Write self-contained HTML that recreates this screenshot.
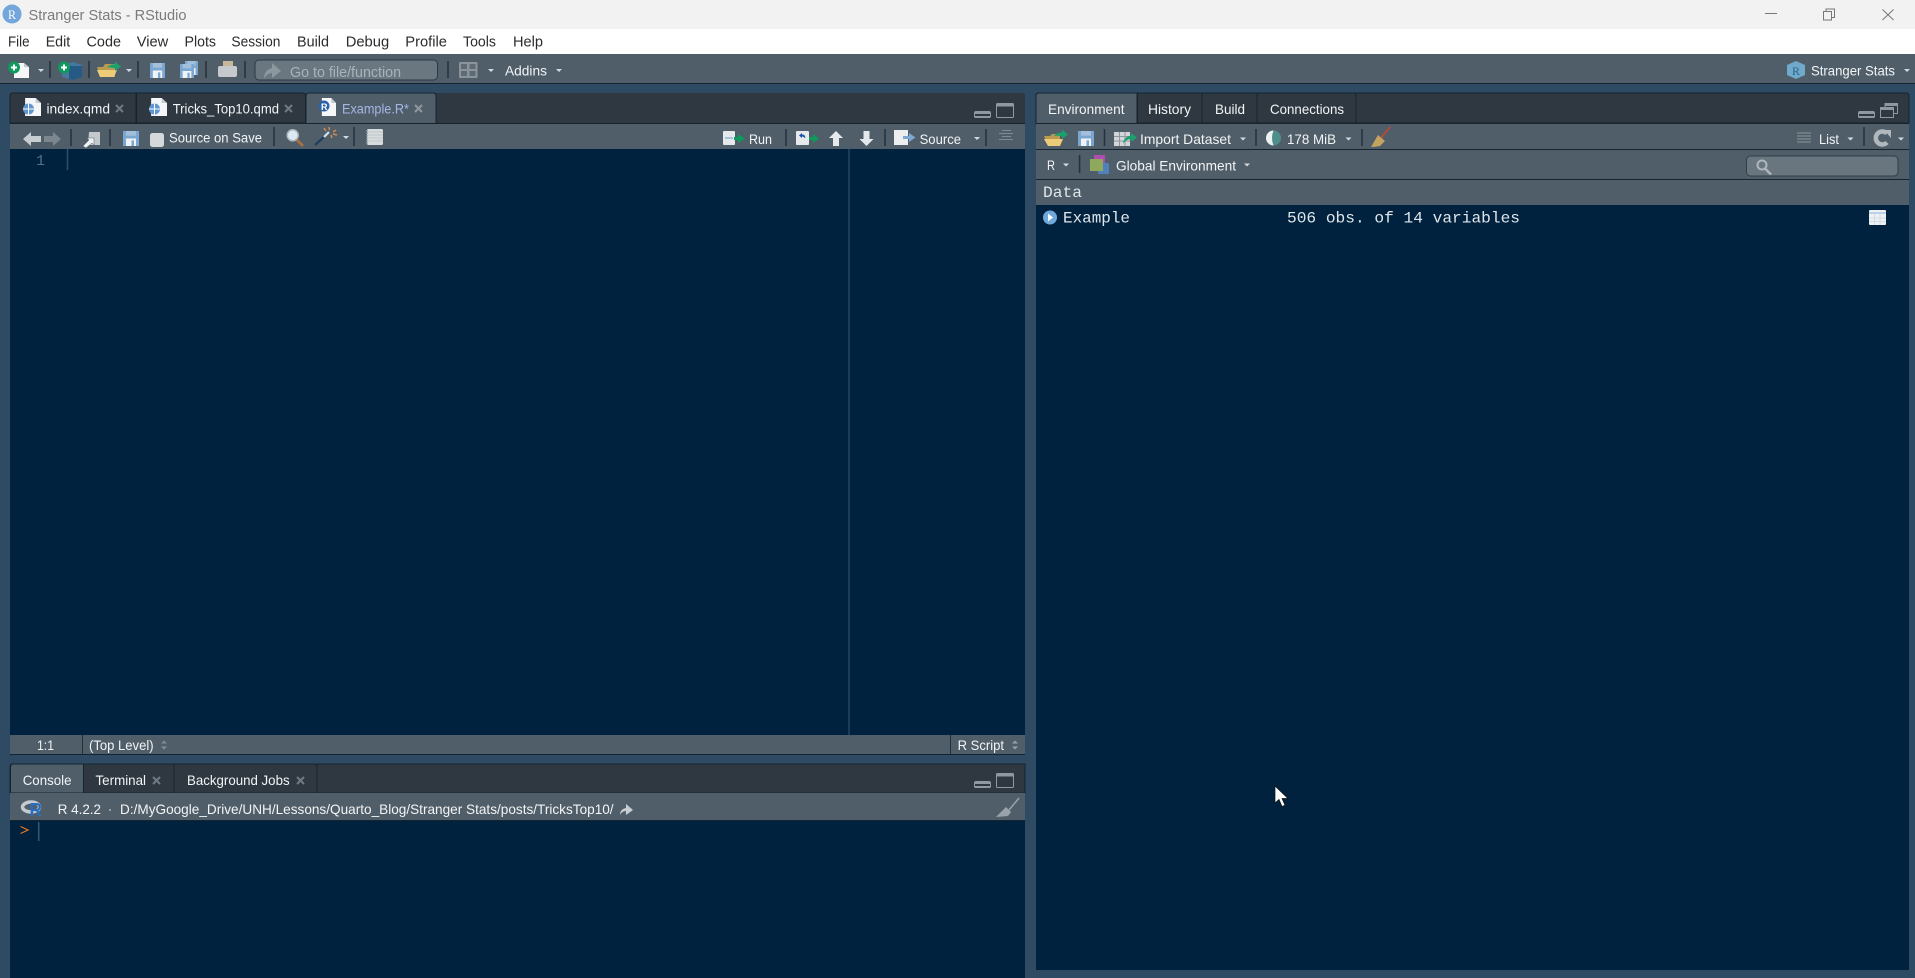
<!DOCTYPE html>
<html lang="en"><head><meta charset="utf-8"><title>Stranger Stats - RStudio</title>
<style>
html,body{margin:0;padding:0;background:#2f4a63;overflow:hidden}
svg{display:block}
text{font-family:"Liberation Sans",sans-serif;font-size:14px;fill:#f2f4f5}
.m{font-family:"Liberation Mono",monospace;font-size:16px;fill:#dfe6ea}
.menu{font-size:15px;fill:#2b2b2b}
.sep{stroke:#24313c;stroke-width:1.500}
.dd{fill:#d5dade}
.x{stroke:#6f7a83;stroke-width:2;fill:none}
.dark{fill:#00223f}
</style></head><body>
<svg xmlns="http://www.w3.org/2000/svg" width="1915" height="978" viewBox="0 0 1915 978">
<defs>
<symbol id="save" viewBox="0 0 16 16" preserveAspectRatio="none"><path d="M0 0h16v16H0z" fill="#7aa6d2"/><path d="M3 0h10v5H3z" fill="#a3bfda"/><path d="M3 8h10v8H3z" fill="#f0f2f4"/><path d="M8.500 10h2.500v6H8.500z" fill="#7aa6d2"/></symbol>
<symbol id="doc" viewBox="0 0 17 18" preserveAspectRatio="none"><path d="M2 0h10l5 5v13H2z" fill="#f4f6f7"/><path d="M12 0l5 5h-5z" fill="#c3c9ce"/></symbol>
<symbol id="minb" viewBox="0 0 17 7"><path d="M1 1h15v2H1z" fill="#8f989f"/><path d="M1 5h15v2H1z" fill="#8f989f"/><path d="M.5 6.500V2q0-1.500 1.500-1.500h13q1.500 0 1.500 1.500v4.500" fill="none" stroke="#8f989f"/></symbol>
<symbol id="maxb" viewBox="0 0 18 15"><rect x=".5" y=".5" width="17" height="14" rx="1" fill="none" stroke="#8f989f"/><path d="M1 1h16v2.500H1z" fill="#8f989f"/></symbol>
</defs>

<!-- base -->
<rect width="1915" height="978" fill="#2f4a63"/>
<rect width="1915" height="29" fill="#f2f2f2"/>
<rect y="29" width="1915" height="25" fill="#fff"/>
<rect y="54" width="1915" height="29" fill="#505e69"/>
<rect y="83" width="1915" height="1" fill="#16242f"/>

<!-- title -->
<circle cx="12" cy="14" r="9.500" fill="#73a6da"/>
<text x="8" y="19" style="font-family:'Liberation Serif',serif;font-size:13px;fill:#fff" textLength="8" lengthAdjust="spacingAndGlyphs">R</text>
<text x="28.500" y="20" style="font-size:15px;fill:#7b7b7b" textLength="158" lengthAdjust="spacingAndGlyphs">Stranger Stats - RStudio</text>
<path d="M1765 13.500h12" stroke="#777" fill="none"/>
<path d="M1823.500 11.500h8v8.500h-8zM1826 11.500v-2.500h8.500v8.500h-3" stroke="#777" fill="none"/>
<path d="M1882.500 9.500l11 10.500M1893.500 9.500l-11 10.500" stroke="#777" fill="none"/>

<!-- menu -->
<text class="menu" x="8" y="46.500" textLength="21.500" lengthAdjust="spacingAndGlyphs">File</text>
<text class="menu" x="45.700" y="46.500" textLength="24.500" lengthAdjust="spacingAndGlyphs">Edit</text>
<text class="menu" x="86.500" y="46.500" textLength="34.500" lengthAdjust="spacingAndGlyphs">Code</text>
<text class="menu" x="136.700" y="46.500" textLength="31.500" lengthAdjust="spacingAndGlyphs">View</text>
<text class="menu" x="184.500" y="46.500" textLength="31.500" lengthAdjust="spacingAndGlyphs">Plots</text>
<text class="menu" x="231.400" y="46.500" textLength="49" lengthAdjust="spacingAndGlyphs">Session</text>
<text class="menu" x="297" y="46.500" textLength="32" lengthAdjust="spacingAndGlyphs">Build</text>
<text class="menu" x="345.700" y="46.500" textLength="43.500" lengthAdjust="spacingAndGlyphs">Debug</text>
<text class="menu" x="405.300" y="46.500" textLength="41.700" lengthAdjust="spacingAndGlyphs">Profile</text>
<text class="menu" x="463" y="46.500" textLength="33" lengthAdjust="spacingAndGlyphs">Tools</text>
<text class="menu" x="513" y="46.500" textLength="30" lengthAdjust="spacingAndGlyphs">Help</text>

<!-- main toolbar -->
<use href="#doc" x="12" y="63" width="17" height="15"/>
<circle cx="14" cy="67.500" r="6" fill="#0d9a5c"/><path d="M11 67.500h6M14 64.500v6" stroke="#fff" stroke-width="2"/>
<path class="dd" d="M38 69h6l-3 3z"/>
<path class="sep" d="M50 61v17M89 61v17M138 61v17M206 61v17M245 61v17M448 61v17"/>
<path d="M62 65l11-3 9 3v12l-9 3-11-3z" fill="#47789c"/><path d="M69 66h13v11l-9 3-4-1z" fill="#265a86"/>
<circle cx="64" cy="67.500" r="6" fill="#0d9a5c"/><path d="M61 67.500h6M64 64.500v6" stroke="#fff" stroke-width="2"/>
<path d="M97 67h6l2-3h10v13H100z" fill="#b89a52"/><path d="M97 70h20l-3 7H100z" fill="#eccb79"/>
<path d="M107 67q4-3 8-2.500v-3l6 5-6 4.500v-3q-5-.500-8-1z" fill="#1aa26c"/>
<path class="dd" d="M126 69h6l-3 3z"/>
<use href="#save" x="150" y="63" width="15" height="15"/>
<use href="#save" x="185" y="61" width="13" height="14"/>
<use href="#save" x="180" y="64" width="14" height="14"/>
<path d="M223 61h10v7h-10z" fill="#c9b79b"/><path d="M218 68q0-2 2-2h15q2 0 2 2v7q0 2-2 2h-15q-2 0-2-2z" fill="#c6cace"/>
<rect x="255" y="60" width="182.500" height="20" rx="4" fill="#6a7780" stroke="#2a3a48"/>
<path d="M264 79q0-9 8-11v-5l9 8-9 7v-5q-5 0-8 6z" fill="#8d979e"/>
<text x="290" y="77" style="fill:#a9b2b8;font-size:14.500px" textLength="111" lengthAdjust="spacingAndGlyphs">Go to file/function</text>
<rect x="459" y="62" width="18.500" height="16" rx="1" fill="#8b949b"/><path d="M461 64h6v5h-6zM469.500 64h6v5h-6zM461 71h6v5h-6zM469.500 71h6v5h-6z" fill="#5f6b74"/>
<path class="dd" d="M488 69h6l-3 3z"/>
<text x="505" y="75.500" textLength="42" lengthAdjust="spacingAndGlyphs">Addins</text>
<path class="dd" d="M556 69h6l-3 3z"/>
<path d="M1796 61l9 4v10l-9 4-9-4V65z" fill="#6fa9cc"/><text x="1792" y="75" style="font-size:12px;fill:#2f6484;font-family:'Liberation Serif',serif">R</text>
<text x="1811" y="75.500" textLength="84" lengthAdjust="spacingAndGlyphs">Stranger Stats</text>
<path class="dd" d="M1904 69h6l-3 3z"/>

<!-- Source pane -->
<path d="M10 123V96q0-3 3-3h1009q3 0 3 3v27z" fill="#2f3841"/>
<path d="M10 123V96q0-3 3-3h123v30z" fill="#2f3841" stroke="#16242f"/>
<path d="M136.500 123V93h166q3 0 3 3v27z" fill="#2f3841" stroke="#16242f"/>
<path d="M306 124V96q0-3 3-3h124q3 0 3 3v28z" fill="#505e69" stroke="#16242f"/>
<use href="#doc" x="23" y="98" width="18" height="18"/><circle cx="28.500" cy="109" r="5.500" fill="#5f96cf"/><path d="M28.500 103.500v11M23 109h11" stroke="#fff"/>
<text x="46.500" y="113.500" textLength="63.500" lengthAdjust="spacingAndGlyphs">index.qmd</text>
<path class="x" d="M116 105l7 7M123 105l-7 7"/>
<use href="#doc" x="149" y="98" width="18" height="18"/><circle cx="154.500" cy="109" r="5.500" fill="#5f96cf"/><path d="M154.500 103.500v11M149 109h11" stroke="#fff"/>
<text x="172.700" y="113.500" textLength="106.300" lengthAdjust="spacingAndGlyphs">Tricks_Top10.qmd</text>
<path class="x" d="M285 105l7 7M292 105l-7 7"/>
<use href="#doc" x="320" y="98" width="16" height="18"/><circle cx="324" cy="106" r="5.500" fill="#2c63a8"/><text x="321" y="110" style="font-size:9px;fill:#fff;font-weight:bold">R</text>
<text x="342" y="113.500" style="fill:#a6b6e6" textLength="67" lengthAdjust="spacingAndGlyphs">Example.R*</text>
<path class="x" d="M415 105l7 7M422 105l-7 7" style="stroke:#8d979e"/>
<use href="#minb" x="974" y="111" width="17" height="7"/>
<use href="#maxb" x="996" y="103" width="18" height="15"/>
<rect x="10" y="123" width="1015" height="26" fill="#505e69"/>
<rect x="10" y="123" width="1015" height="1" fill="#16242f"/>
<path d="M23 139l8-7v4h10v6H31v4z" fill="#c8cdd1"/>
<path d="M61 139l-8-7v4H44v6h9v4z" fill="#7b868e"/>
<path class="sep" d="M71 129v17M110 129v17M274 127v19M354 127v19M786 129v17M885 129v17M986 129v17"/>
<path d="M89 132h11v13H88z" fill="#c3c8cc"/><path d="M83 146l6-6-2-2h7v7l-2-2-6 5z" fill="#eef0f1" stroke="#505e69" stroke-width=".5"/>
<use href="#save" x="123" y="131" width="16" height="15"/>
<rect x="150" y="133" width="14" height="14" rx="2.500" fill="#d6d9dc"/>
<text x="169" y="142.700" textLength="93" lengthAdjust="spacingAndGlyphs">Source on Save</text>
<circle cx="292.700" cy="135.300" r="5.500" fill="#dce9f2" stroke="#aeb8c0" stroke-width="1.500"/><path d="M297 140l6 6" stroke="#a8703f" stroke-width="2.800"/>
<path d="M315 145l9-8" stroke="#1e3f5e" stroke-width="2.200"/><path d="M324 137l5-5" stroke="#cfe0ee" stroke-width="2.200"/>
<path d="M329 127l.5 3M336 130l-3 2M337 135l-4-1M332 138l-1-3M324 128l2 3" stroke="#cf8a55" stroke-width="1.500"/>
<path class="dd" d="M343 136h6l-3 3z"/>
<rect x="367" y="129" width="16" height="16" rx="1.500" fill="#d9dcde"/><path d="M367 132h16M367 135h16M367 138h16M367 141h16" stroke="#b8bec3" stroke-width=".7"/><path d="M367 130v14" stroke="#8e979e" stroke-width="1.500" stroke-dasharray="1.500 1"/>
<rect x="723" y="131" width="12" height="14" rx="1" fill="#e6e9eb"/><path d="M725 137h8v2h-8z" fill="#a9c3de"/><path d="M734 137h4v-3l7 4.500-7 4.500v-3h-4z" fill="#0d9a5c"/>
<text x="749" y="144" textLength="23" lengthAdjust="spacingAndGlyphs">Run</text>
<rect x="796" y="131" width="13" height="14" rx="1" fill="#e6e9eb"/><path d="M802 138l-3-2.500 3-2.500v1.500q4 0 3 4-1-2-3-2z" fill="#1c4fa8"/><path d="M809 137h4v-3l6 4.500-6 4.500v-3h-4z" fill="#0d9a5c"/>
<path d="M836 131l7 7h-4v8h-6v-8h-4z" fill="#e6e9eb"/>
<path d="M866.500 146l7-7h-4v-8h-6v8h-4z" fill="#e6e9eb"/>
<rect x="894" y="130" width="14" height="15" fill="#eceeef"/><path d="M903 136h6v-3l6.500 4.500-6.500 4.500v-3h-6z" fill="#7da8d3"/>
<text x="919.600" y="144" textLength="41.400" lengthAdjust="spacingAndGlyphs">Source</text>
<path class="dd" d="M974 137h6l-3 3z"/>
<path d="M1002 130.500h9M999 133.500h14M1002 136.500h9M999 139.500h14" stroke="#7f8a92"/>

<rect class="dark" x="10" y="149" width="1015" height="586"/>
<path d="M849 149v586" stroke="#274564" stroke-width="1.500"/>
<path d="M67.500 149v21" stroke="#2f4e6c" stroke-width="1.500"/>
<text class="m" x="36" y="165" style="fill:#53708b;font-size:15px">1</text>

<rect x="10" y="735" width="1015" height="19" fill="#505e69"/>
<path d="M10 754.500h1015" stroke="#16242f"/>
<path d="M82.500 735v19M950.500 735v19" stroke="#22303b"/>
<text x="37" y="750" textLength="17" lengthAdjust="spacingAndGlyphs">1:1</text>
<text x="89" y="750" textLength="64.600" lengthAdjust="spacingAndGlyphs">(Top Level)</text>
<path d="M161 743.500l3-3 3 3zM161 746.500l3 3 3-3z" fill="#848e96"/>
<text x="957.600" y="750" textLength="46.400" lengthAdjust="spacingAndGlyphs">R Script</text>
<path d="M1012 743.500l3-3 3 3zM1012 746.500l3 3 3-3z" fill="#98a1a8"/>

<!-- Console -->
<path d="M10 793V767q0-3 3-3h1012v29z" fill="#2f3841" stroke="#16242f"/>
<path d="M10.500 793V767q0-3 3-3h70v29z" fill="#505e69" stroke="#16242f"/>
<path d="M83.500 793V764h90.500v29zM174 793V764h140q3 0 3 3v26z" fill="#2f3841" stroke="#16242f"/>
<text x="22.700" y="785" textLength="48.800" lengthAdjust="spacingAndGlyphs">Console</text>
<text x="95.500" y="785" textLength="50.500" lengthAdjust="spacingAndGlyphs">Terminal</text>
<path class="x" d="M153 777l7 7M160 777l-7 7"/>
<text x="187" y="785" textLength="102.600" lengthAdjust="spacingAndGlyphs">Background Jobs</text>
<path class="x" d="M297 777l7 7M304 777l-7 7"/>
<use href="#minb" x="974" y="781" width="17" height="7"/>
<use href="#maxb" x="996" y="773" width="18" height="15"/>
<rect x="10" y="793" width="1015" height="27.500" fill="#505e69"/>
<ellipse cx="31" cy="807" rx="8.500" ry="5" fill="none" stroke="#c3cbd1" stroke-width="3.500"/>
<text x="29.500" y="816" style="font-size:18px;font-weight:bold;fill:#2a6ebf" textLength="12.500" lengthAdjust="spacingAndGlyphs">R</text>
<text x="57.700" y="814" textLength="43.300" lengthAdjust="spacingAndGlyphs">R 4.2.2</text>
<circle cx="110" cy="810" r="1" fill="#aeb6bc"/>
<text x="120" y="814" textLength="493.600" lengthAdjust="spacingAndGlyphs">D:/MyGoogle_Drive/UNH/Lessons/Quarto_Blog/Stranger Stats/posts/TricksTop10/</text>
<path d="M620 815q0-6 6-7v-4l7 6-7 5v-4q-4 0-6 4z" fill="#c8cdd1"/>
<path d="M1019 798l-10 12" stroke="#9aa3a9" stroke-width="1.500"/><path d="M1006 807l5 5-3 4-12 1z" fill="#9aa3a9"/>
<rect class="dark" x="10" y="820.500" width="1015" height="158"/>
<rect x="10" y="820" width="1015" height="1" fill="#16242f"/>
<path d="M20.500 826.500l7.500 3.500-7.500 3.500" fill="none" stroke="#e8761e" stroke-width="1.200"/>
<path d="M38.700 822v19" stroke="#38587a" stroke-width="1.500"/>

<!-- Right pane -->
<path d="M1036 123V96q0-3 3-3h867q3 0 3 3v27z" fill="#2f3841" stroke="#16242f"/>
<path d="M1036 124V96q0-3 3-3h98v31z" fill="#505e69" stroke="#16242f"/>
<path d="M1137.500 123V93h64.500v30zM1202 123V93h55v30zM1257 123V93h96q3 0 3 3v27z" fill="#2f3841" stroke="#16242f"/>
<text x="1048" y="114" textLength="76.500" lengthAdjust="spacingAndGlyphs">Environment</text>
<text x="1148" y="114" textLength="43" lengthAdjust="spacingAndGlyphs">History</text>
<text x="1215" y="114" textLength="30" lengthAdjust="spacingAndGlyphs">Build</text>
<text x="1270" y="114" textLength="74" lengthAdjust="spacingAndGlyphs">Connections</text>
<use href="#minb" x="1858" y="111" width="17" height="7"/>
<rect x="1880.500" y="107.500" width="13" height="10" fill="none" stroke="#8f989f"/><path d="M1885 107v-3.500h12.500v10h-3.500" fill="none" stroke="#8f989f"/><path d="M1881 108h12v2h-12zM1885 104h12v2h-12z" fill="#8f989f"/>

<rect x="1036" y="123" width="873" height="82" fill="#505e69"/>
<path d="M1036 123.500h873M1036 149.500h873M1036 179.500h873" stroke="#16242f"/>
<path d="M1044 136h6l2-2h8v12h-12z" fill="#b89a52"/><path d="M1044 139h19l-3 7h-12z" fill="#eccb79"/>
<path d="M1054 136q3-4 8-3.500v-3l6 5-6 4.500v-3q-5-.500-8 0z" fill="#1aa26c"/>
<use href="#save" x="1078" y="131" width="16" height="15"/>
<path class="sep" d="M1104.500 129v17M1256 129v17M1362 129v17M1864 127v19M1079.600 155v18"/>
<rect x="1114" y="132" width="16" height="14" fill="#d3d6d9"/><path d="M1114 136.500h16M1114 141h16M1119.500 132v14M1125 132v14" stroke="#8d979e"/>
<path d="M1123 144q1-8 8-8v-3l6 4.500-6 4.500v-3q-5 0-8 5z" fill="#1aa26c"/>
<text x="1140" y="144" textLength="91" lengthAdjust="spacingAndGlyphs">Import Dataset</text>
<path class="dd" d="M1240 137.500h6l-3 3z"/>
<circle cx="1273.500" cy="138" r="7.500" fill="#4e8f8a"/><path d="M1273.500 130.500a7.500 7.500 0 0 0 0 15q-3-7.500 0-15z" fill="#eef1f2"/>
<text x="1287" y="144" textLength="49" lengthAdjust="spacingAndGlyphs">178 MiB</text>
<path class="dd" d="M1345.500 137.500h6l-3 3z"/>
<path d="M1390 127l-9 11" stroke="#b94a3a" stroke-width="1.800"/><path d="M1378 135l7 6-5 5q-5 1-9 1z" fill="#c4a25f"/>
<path d="M1797 133h14M1797 136h14M1797 139h14M1797 142h14" stroke="#8b959c"/>
<text x="1819" y="144" textLength="20" lengthAdjust="spacingAndGlyphs">List</text>
<path class="dd" d="M1847.500 137.500h6l-3 3z"/>
<path d="M1887 133.500a6.500 6.500 0 1 0 0 9" fill="none" stroke="#b0b8bd" stroke-width="4.500"/><path d="M1884 130h7v8z" fill="#b0b8bd"/>
<path class="dd" d="M1898 137.500h6l-3 3z"/>
<text x="1047" y="170" textLength="8" lengthAdjust="spacingAndGlyphs">R</text>
<path class="dd" d="M1063 163.500h6l-3 3z"/>
<rect x="1094" y="155" width="11" height="14" fill="#b04bb0"/><rect x="1098" y="163" width="11" height="11" rx="1" fill="#4f82bb"/><rect x="1090" y="159" width="13" height="12" fill="#8ea85c"/>
<text x="1116" y="170.500" textLength="120" lengthAdjust="spacingAndGlyphs">Global Environment</text>
<path class="dd" d="M1244 163.500h6l-3 3z"/>
<rect x="1746.500" y="156" width="151.500" height="20" rx="4" fill="#69767f" stroke="#2f3d49"/>
<circle cx="1762" cy="165" r="4.500" fill="none" stroke="#aeb6bc" stroke-width="2"/><path d="M1765 168.500l6 6" stroke="#aeb6bc" stroke-width="2.500"/>
<text class="m" x="1043" y="197" textLength="39" lengthAdjust="spacingAndGlyphs">Data</text>
<rect class="dark" x="1036" y="205" width="873" height="765"/>
<circle cx="1050" cy="217.500" r="7" fill="#6fa9dc"/><path d="M1048 213.500l5 4-5 4z" fill="#fff"/>
<text class="m" x="1063" y="222.700" textLength="67" lengthAdjust="spacingAndGlyphs">Example</text>
<text class="m" x="1287" y="222.700" textLength="233" lengthAdjust="spacingAndGlyphs">506 obs. of 14 variables</text>
<rect x="1869" y="210" width="17" height="15" rx="1" fill="#eef1f3"/><path d="M1869 213h17" stroke="#b9d0e6" stroke-width="2"/><path d="M1874.500 214v11M1880 214v11M1869 218h17M1869 221.500h17" stroke="#cdd6dd" stroke-width=".8"/>

<!-- mouse pointer -->
<path d="M1275 786l0 17 4-3.500 3 7 3-1.300-3-6.700 6 0z" fill="#fff" stroke="#111" stroke-width=".7"/>
</svg>
</body></html>
